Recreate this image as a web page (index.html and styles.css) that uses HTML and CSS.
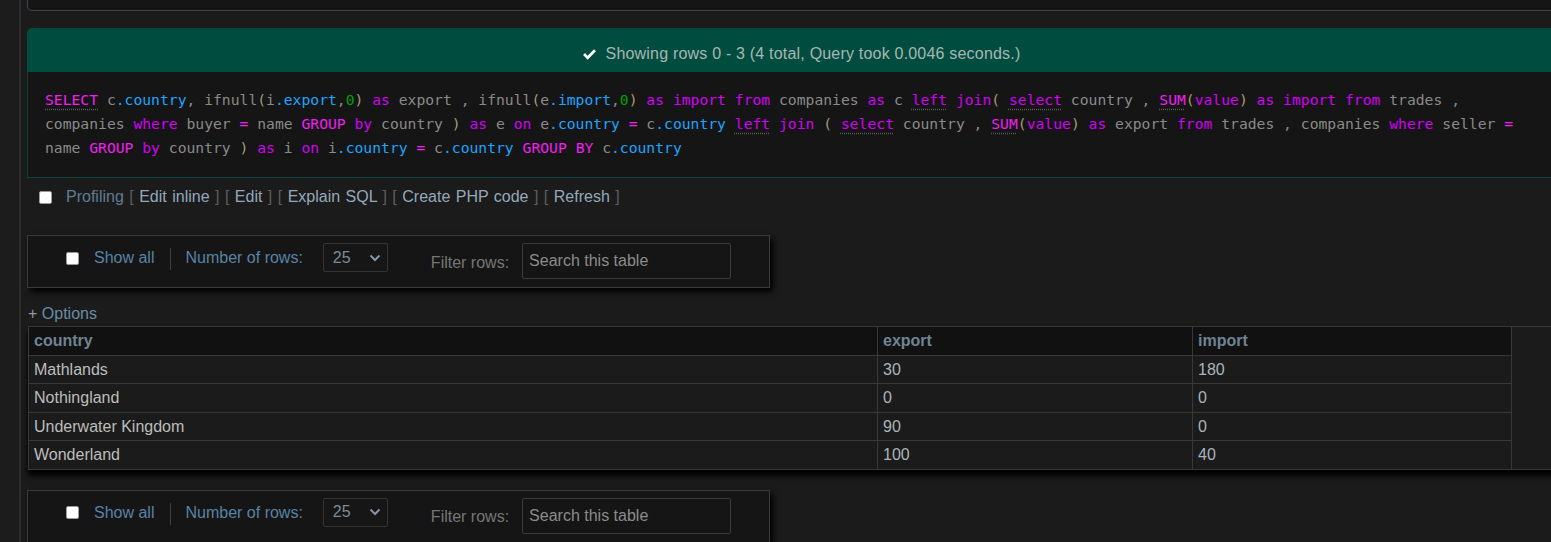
FILE: index.html
```html
<!DOCTYPE html>
<html lang="en">
<head>
<meta charset="utf-8">
<title>SQL result</title>
<link rel="stylesheet" href="styles.css">
</head>
<body>
<div class="page">
  <aside class="rail"></aside>
  <main class="main">
    <div class="content">
      <div class="prev-box"></div>

      <div class="success">
        <svg class="check" width="15" height="13" viewBox="0 0 14 12"><path d="M1 6.5 L2.8 4.7 L5.3 7.2 L11.2 1.2 L13 3 L5.3 10.8 Z" fill="#ffffff"/></svg>
        <span class="msg">Showing rows 0 - 3 (4 total, Query took 0.0046 seconds.)</span>
      </div>

      <div class="sql-box">
        <div class="sql"><span class="kw u up">SELECT</span> c<span class="id">.country</span>, ifnull<span class="p">(</span>i<span class="id">.export</span>,<span class="num">0</span><span class="p">)</span> <span class="kw">as</span> export , ifnull<span class="p">(</span>e<span class="id">.import</span>,<span class="num">0</span><span class="p">)</span> <span class="kw">as</span> <span class="kw">import</span> <span class="kw">from</span> companies <span class="kw">as</span> c <span class="kw u">left</span> <span class="kw">join</span><span class="p">(</span> <span class="kw u">select</span> country , <span class="kw u up">SUM</span><span class="p">(</span><span class="kw">value</span><span class="p">)</span> <span class="kw">as</span> <span class="kw">import</span> <span class="kw">from</span> trades , companies <span class="kw">where</span> buyer <span class="kw up">=</span> name <span class="kw up">GROUP</span> <span class="kw">by</span> country <span class="p">)</span> <span class="kw">as</span> e <span class="kw">on</span> e<span class="id">.country</span> <span class="kw up">=</span> c<span class="id">.country</span> <span class="kw u">left</span> <span class="kw">join</span> <span class="p">(</span> <span class="kw u">select</span> country , <span class="kw u up">SUM</span><span class="p">(</span><span class="kw">value</span><span class="p">)</span> <span class="kw">as</span> export <span class="kw">from</span> trades , companies <span class="kw">where</span> seller <span class="kw up">=</span> name <span class="kw up">GROUP</span> <span class="kw">by</span> country <span class="p">)</span> <span class="kw">as</span> i <span class="kw">on</span> i<span class="id">.country</span> <span class="kw up">=</span> c<span class="id">.country</span> <span class="kw up">GROUP</span> <span class="kw up">BY</span> c<span class="id">.country</span></div>
      </div>

      <div class="profiling">
        <input type="checkbox" class="cb">
        <span class="prof-links"><span class="prof-label">Profiling</span> <span class="br">[</span> <a class="lnk">Edit inline</a> <span class="br">]</span> <span class="br">[</span> <a class="lnk">Edit</a> <span class="br">]</span> <span class="br">[</span> <a class="lnk">Explain SQL</a> <span class="br">]</span> <span class="br">[</span> <a class="lnk">Create PHP code</a> <span class="br">]</span> <span class="br">[</span> <a class="lnk">Refresh</a> <span class="br">]</span></span>
      </div>

      <div class="navbox">
        <div class="nav-group">
          <input type="checkbox" class="cb nav-cb">
          <span class="nav-label">Show all</span>
          <span class="sep"></span>
          <span class="nav-label">Number of rows:</span>
          <div class="select"><span>25</span><svg width="12" height="8" viewBox="0 0 12 8"><path d="M1.5 1.5 L6 6 L10.5 1.5" stroke="#8494a0" stroke-width="2" fill="none"/></svg></div>
        </div>
        <div class="nav-group filter">
          <span class="filter-label">Filter rows:</span>
          <div class="search">Search this table</div>
        </div>
      </div>

      <div class="options"><span class="plus">+</span> Options</div>

      <div class="result-wrap">
        <table class="result">
          <colgroup><col class="c1"><col class="c2"><col class="c3"></colgroup>
          <thead>
            <tr><th>country</th><th>export</th><th>import</th></tr>
          </thead>
          <tbody>
            <tr><td>Mathlands</td><td class="n">30</td><td class="n">180</td></tr>
            <tr><td>Nothingland</td><td class="n">0</td><td class="n">0</td></tr>
            <tr><td>Underwater Kingdom</td><td class="n">90</td><td class="n">0</td></tr>
            <tr><td>Wonderland</td><td class="n">100</td><td class="n">40</td></tr>
          </tbody>
        </table>
      </div>

      <div class="navbox bottom">
        <div class="nav-group">
          <input type="checkbox" class="cb nav-cb">
          <span class="nav-label">Show all</span>
          <span class="sep"></span>
          <span class="nav-label">Number of rows:</span>
          <div class="select"><span>25</span><svg width="12" height="8" viewBox="0 0 12 8"><path d="M1.5 1.5 L6 6 L10.5 1.5" stroke="#8494a0" stroke-width="2" fill="none"/></svg></div>
        </div>
        <div class="nav-group filter">
          <span class="filter-label">Filter rows:</span>
          <div class="search">Search this table</div>
        </div>
      </div>
    </div>
  </main>
</div>
</body>
</html>
```

FILE: styles.css
```css
html, body {
  margin: 0;
  padding: 0;
  background: #1b1b1b;
  overflow: hidden;
  height: 542px;
}
body {
  font-family: "Liberation Sans", Arial, sans-serif;
  font-size: 16px;
  color: #bcbcbc;
}
.page {
  display: flex;
  align-items: stretch;
  min-height: 542px;
}
.rail {
  width: 19px;
  flex: 0 0 19px;
  background: #1c1c1c;
  border-right: 2px solid #2c2c2c;
}
.main {
  flex: 1;
  padding-left: 6px;
  overflow: hidden;
}
.content {
  width: 1548px;
}
.prev-box {
  height: 10px;
  background: #151515;
  border: 1px solid #394451;
  border-top: none;
  border-radius: 0 0 5px 5px;
}
.success {
  margin-top: 17px;
  height: 44px;
  box-sizing: border-box;
  padding-top: 8px;
  background: #004d40;
  border-radius: 5px 5px 0 0;
  display: flex;
  align-items: center;
  justify-content: center;
  gap: 9px;
  color: #a9b5b2;
  line-height: 18px;
}
.success .msg { letter-spacing: 0.2px; }
.success .check { display: block; }
.sql-box {
  background: #151515;
  border: 1px solid #0d4238;
  border-top: none;
  padding: 16px 40px 17px 17px;
}
.sql {
  font-family: "DejaVu Sans Mono", "Liberation Mono", monospace;
  font-size: 14.7px;
  line-height: 24px;
  color: #8a8a8a;
}
.sql .kw { color: #d400f5; }
.sql .up { color: #f020f0; }
.sql .u {
  text-decoration: underline dotted #5a5a5a;
  text-underline-offset: 4px;
}
.sql .id { color: #1ea5ff; }
.sql .num { color: #00a000; }
.sql .p { color: #a89c72; }

.cb {
  appearance: none;
  -webkit-appearance: none;
  width: 13px;
  height: 13px;
  margin: 0;
  background: #ffffff;
  border: 1px solid #9a9a9a;
  border-radius: 2px;
  box-sizing: border-box;
  flex: 0 0 13px;
}
.profiling {
  display: flex;
  align-items: center;
  padding: 10px 0 0 12px;
  line-height: 18px;
}
.profiling .cb { margin-right: 14px; }
.prof-links { word-spacing: 1px; }
.prof-label { color: #5f7c94; }
.br { color: #5e5e5e; }
.lnk { color: #93a9ba; }

.navbox {
  margin-top: 29px;
  background: #151515;
  border: 1px solid #3a3a3a;
  box-shadow: 3px 4px 6px #000;
  padding: 7px 0 8px 38px;
  box-sizing: border-box;
  width: 743px;
  display: flex;
  align-items: flex-start;
  gap: 43px;
}
.navbox.bottom { margin-top: 20px; }
.nav-group {
  display: flex;
  align-items: center;
  height: 29px;
}
.nav-group.filter { height: 36px; }
.nav-cb { margin-right: 15px; margin-top: 1px; }
.nav-label { color: #5883a6; line-height: 18px; margin-top: 1px; }
.sep {
  width: 1px;
  height: 22px;
  background: #3e3e3e;
  margin: 3px 14px 0 16px;
}
.select {
  margin-left: 20px;
  width: 65px;
  height: 29px;
  box-sizing: border-box;
  border: 1px solid #343434;
  border-radius: 2px;
  background: #161616;
  display: flex;
  align-items: center;
  justify-content: space-between;
  padding: 0 6px 0 9px;
  color: #7b8c98;
}
.filter-label { color: #767676; margin-top: 3px; margin-right: 13px; }
.search {
  width: 209px;
  height: 36px;
  box-sizing: border-box;
  border: 1px solid #3a3a3a;
  border-radius: 2px;
  background: #151515;
  color: #8b8b8b;
  padding: 0 6px;
  display: flex;
  align-items: center;
}

.options {
  margin: 17px 0 3px 1px;
  line-height: 18px;
  color: #6a8ca4;
}
.options .plus { color: #8a9aa6; }

.result-wrap {
  margin-left: 1px;
  border-top: 1px solid #383838;
  border-bottom: 1px solid #383838;
  background: #1b1b1b;
  box-shadow: 0 6px 6px #000;
}
.result {
  border-collapse: collapse;
  width: 1484px;
  table-layout: fixed;
}
.result col.c1 { width: 849px; }
.result col.c2 { width: 315px; }
.result col.c3 { width: 319px; }
.result th, .result td {
  border-left: 1px solid #383838;
  border-right: 1px solid #383838;
  text-align: left;
  padding: 5px 5px;
  line-height: 17.5px;
  white-space: nowrap;
}
.result th {
  background: #111111;
  color: #6f8491;
  font-weight: bold;
  padding-top: 5px;
  padding-bottom: 5px;
  border-bottom: 1px solid #383838;
}
.result td {
  border-top: 1px solid #383838;
  color: #bdbdbd;
  background: #1b1b1b;
}
.result td.n { color: #a9b4bb; }
.result tbody tr:first-child td { border-top: none; }
```
